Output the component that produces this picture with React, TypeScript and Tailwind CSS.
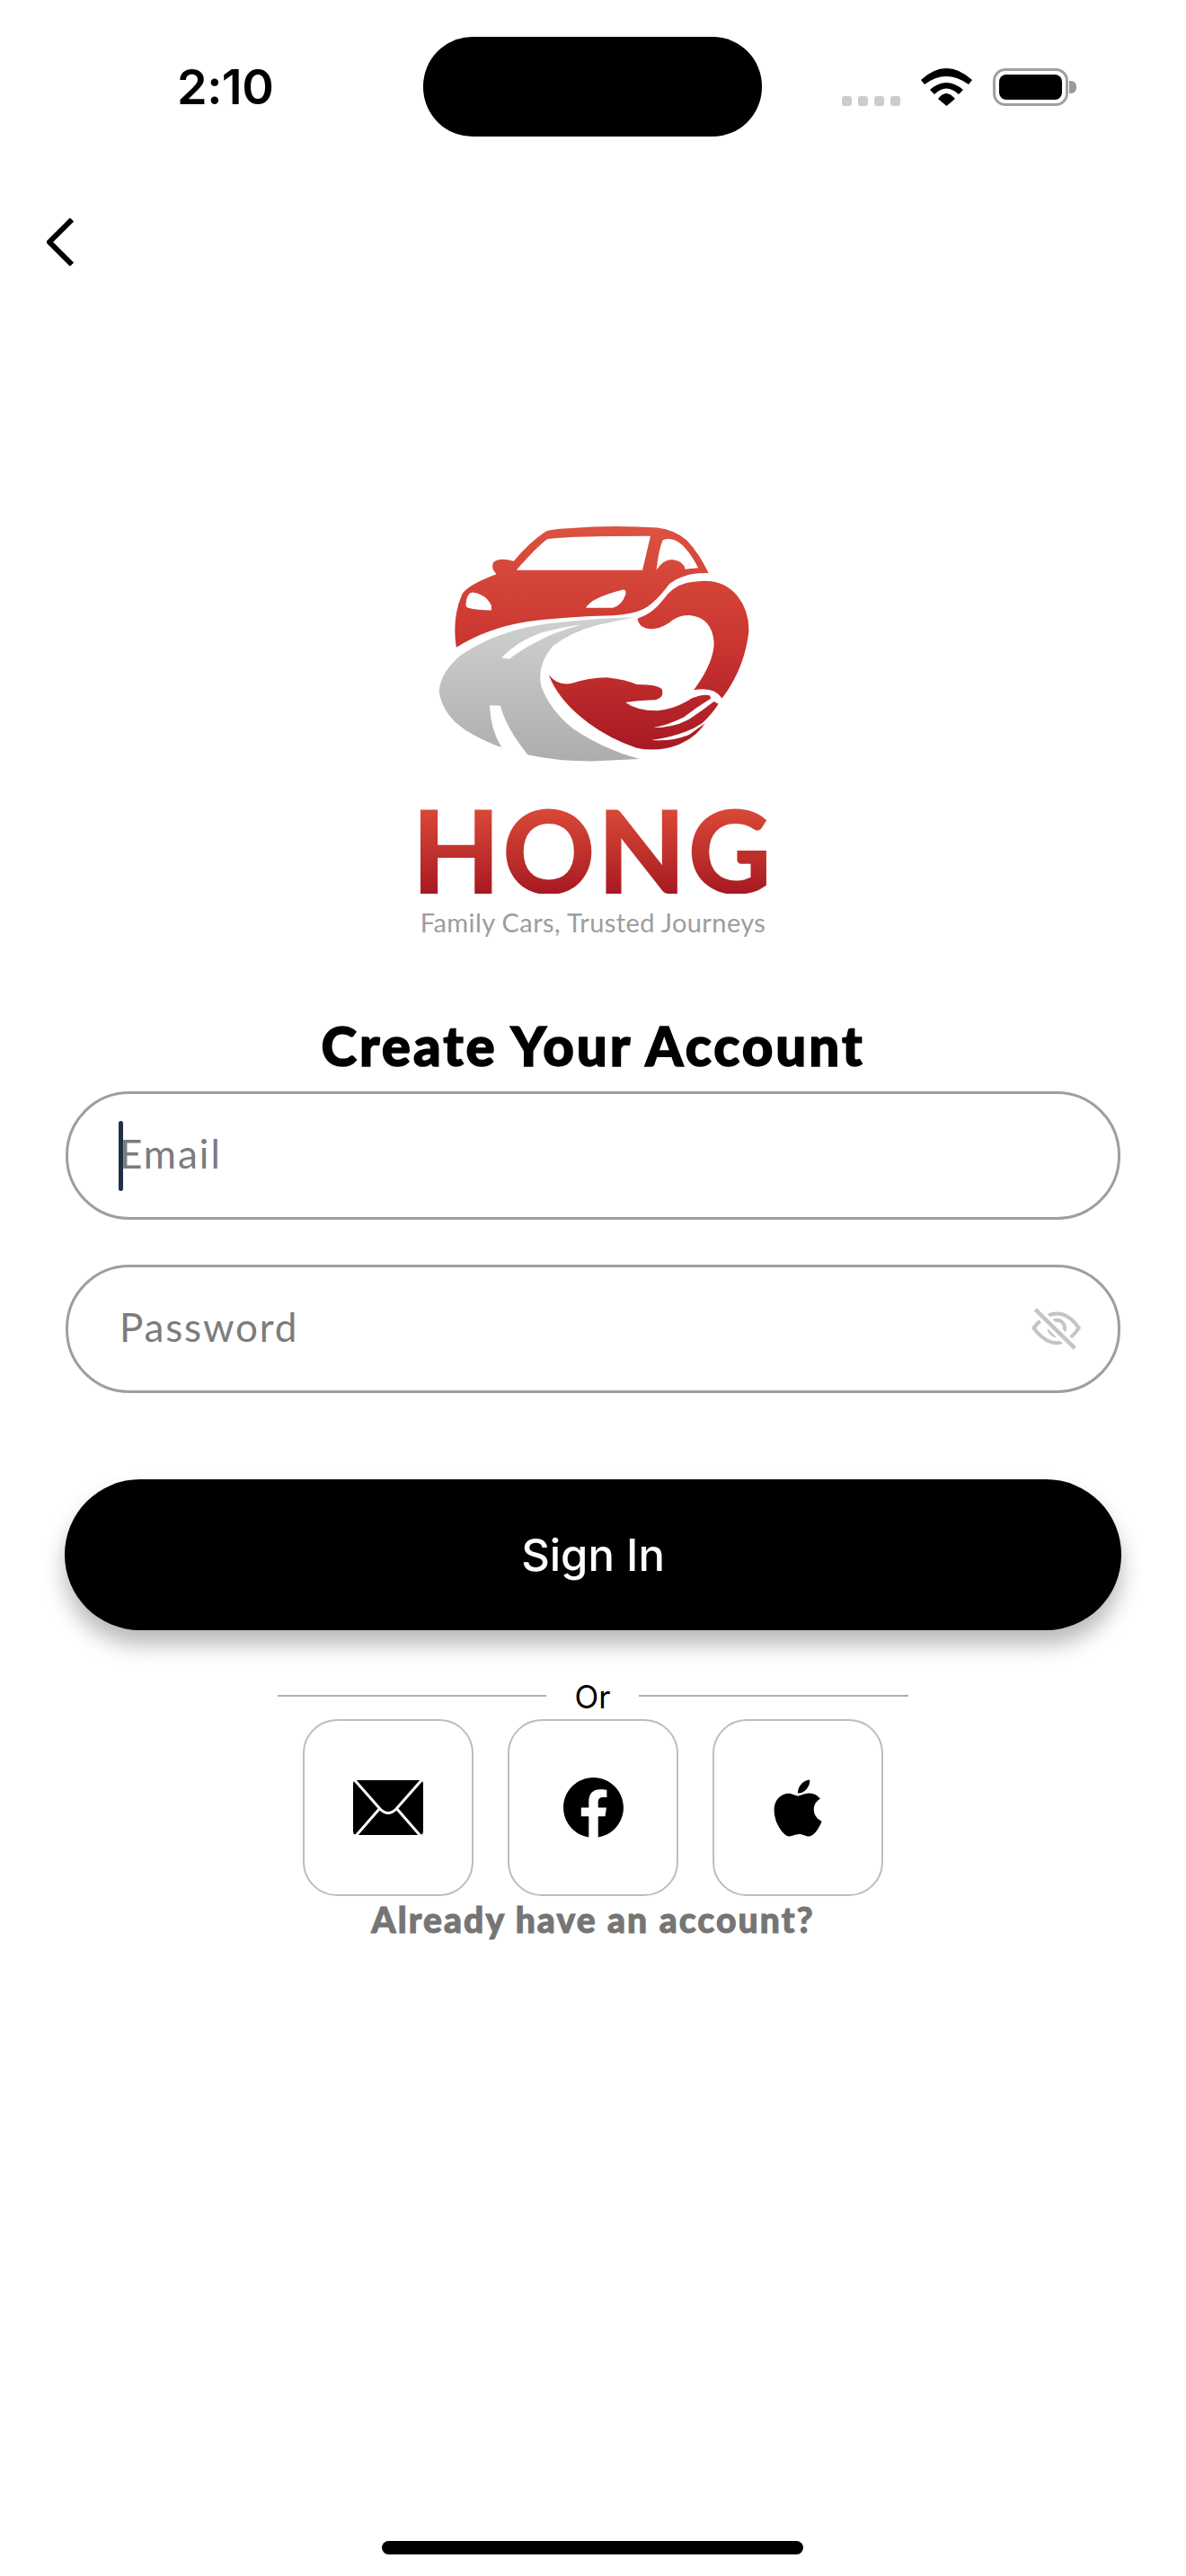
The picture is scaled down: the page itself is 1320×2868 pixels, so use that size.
import React from "react";
import { FaFacebook, FaApple } from "react-icons/fa";

function Logo() {
  return (
    <div className="h-[540px] flex flex-col items-center">
      <svg viewBox="0 0 1568 1031" preserveAspectRatio="none" className="w-[520px] h-[355px] block">
        <defs>
          <linearGradient id="red" gradientUnits="userSpaceOnUse" x1="0" y1="133" x2="0" y2="855">
            <stop offset="0" stopColor="#dd5240" />
            <stop offset="0.55" stopColor="#c93430" />
            <stop offset="1" stopColor="#a71923" />
          </linearGradient>
          <linearGradient id="gray" gradientUnits="userSpaceOnUse" x1="0" y1="430" x2="0" y2="893">
            <stop offset="0" stopColor="#cfd0d0" />
            <stop offset="1" stopColor="#adadad" />
          </linearGradient>
        </defs>
        <path
          fill="url(#red)"
          d="M325 525 Q310 430 345 352 Q365 322 460 288 Q440 270 450 250 Q470 233 518 246 Q570 185 625 150 Q640 143 700 140 Q850 128 1000 138 Q1060 145 1100 180 Q1140 220 1172 285 Q1090 282 1040 320 Q990 385 950 402 Q920 417 850 422 Q700 425 560 442 Q430 462 325 525 Z"
        />
        <path fill="#fff" d="M527 275 Q590 205 630 175 Q700 165 977 165 L950 275 Z" />
        <path fill="#fff" d="M997 275 Q1003 215 1018 178 Q1050 165 1085 195 Q1115 225 1137 268 L1093 272 Q1088 245 1050 241 Q1020 240 997 275 Z" />
        <path fill="#fff" d="M357 388 Q360 350 378 347 Q425 352 443 390 L443 405 Q395 405 365 397 Q357 395 357 388 Z" />
        <path fill="#fff" d="M760 397 Q775 365 885 338 Q897 338 893 355 Q880 390 850 397 Z" />
        <path
          fill="url(#red)"
          d="M933 432 Q985 415 1020 370 Q1060 315 1130 312 Q1220 300 1270 360 Q1307 405 1307 470 Q1295 590 1217 690 Q1190 650 1122 663 Q1190 575 1190 510 Q1185 430 1110 421 Q1070 420 1040 445 Q985 480 945 455 Q935 445 933 432 Z"
        />
        <path
          fill="url(#red)"
          d="M635 613 Q665 650 710 642 Q770 622 830 622 Q900 630 930 645 Q1000 645 1015 660 Q1025 685 995 695 Q950 695 893 703 Q930 730 1000 730 Q1060 725 1115 690 Q1150 675 1175 680 L1180 690 Q1130 720 1090 750 Q1040 775 985 785 Q1060 785 1110 755 Q1150 730 1190 700 L1205 708 Q1180 745 1150 770 Q1090 810 980 825 Q1060 830 1110 805 L1160 770 Q1130 815 1070 840 Q1000 865 930 850 Q840 820 770 770 Q670 700 635 613 Z"
        />
        <path
          fill="url(#gray)"
          d="M925 428 Q700 435 560 460 Q430 490 340 550 Q268 610 268 670 Q280 745 360 795 Q420 830 477 848 Q440 790 437 712 L473 714 Q495 790 565 872 Q660 893 780 893 L940 886 Q820 855 720 790 Q640 730 610 650 Q595 580 650 520 Q710 475 800 452 Q860 440 925 428 Z"
        />
        <path fill="#fff" d="M477 558 Q530 505 610 478 Q680 458 745 452 Q650 475 590 510 Q540 535 503 563 Z" />
      </svg>
      <div className="font-['Lato',sans-serif] font-bold text-[127px] leading-[100px] tracking-[3px] bg-gradient-to-b from-[#dc4b39] to-[#a81722] bg-clip-text text-transparent [-webkit-text-stroke:2px_transparent]">
        HONG
      </div>
      <div className="mt-[17px] font-['Lato',sans-serif] text-[29px] leading-[30px] tracking-[0.4px] text-[#9b9d9f]">
        Family Cars, Trusted Journeys
      </div>
    </div>
  );
}

function Wifi() {
  return (
    <svg viewBox="0 0 57 42" className="w-[57px] h-[42px] block">
      <path d="M0 13 Q28 -13 57 13 L53 18 Q28 0 4 18 Z" fill="#000" />
      <path d="M10 24 Q28 8 47 24 L42 29 Q28 16 15 29 Z" fill="#000" />
      <path d="M19 34 Q28 22 38 34 L28.5 42 Z" fill="#000" />
    </svg>
  );
}

function EyeSlash() {
  return (
    <svg viewBox="145 105 165 140" className="w-[55px] h-[47px] block" fill="none">
      <path d="M152 172 Q190 124 230 124 Q270 124 303 172 Q270 222 230 222 Q190 222 152 172 Z" stroke="#c4c4c4" strokeWidth="12" />
      <circle cx="230" cy="172" r="26" stroke="#c4c4c4" strokeWidth="12" />
      <path d="M158 110 L290 240" stroke="#fff" strokeWidth="34" />
      <path d="M158 110 L290 240" stroke="#c4c4c4" strokeWidth="13" />
    </svg>
  );
}

function Mail() {
  return (
    <svg viewBox="0 0 78 61" className="w-[78px] h-[61px] block">
      <rect x="0" y="0" width="78" height="61" rx="4" fill="#000" />
      <path d="M1 -1 L30 32 Q39 41 48 32 L77 -1" stroke="#fff" strokeWidth="3" fill="none" />
      <path d="M30 31 L3 62 M48 31 L75 62" stroke="#fff" strokeWidth="3" fill="none" />
    </svg>
  );
}

export default function App() {
  const lato = "font-['Lato',sans-serif]";
  return (
    <div className="w-[1320px] h-[2868px] bg-white flex flex-col overflow-hidden">
      <div className="flex items-center pl-[197px] pt-[41px] h-[152px]">
        <div className="w-[274px] font-['Inter',sans-serif] font-semibold text-[54px] leading-none tracking-[-0.5px] text-black">2:10</div>
        <div className="w-[377px] h-[111px] rounded-[55px] bg-black" />
        <div className="flex items-end ml-[89px] h-[42px]">
          <div className="flex gap-[7px]">
            <div className="w-[11px] h-[11px] rounded-[3px] bg-[#cccccc]" />
            <div className="w-[11px] h-[11px] rounded-[3px] bg-[#cccccc]" />
            <div className="w-[11px] h-[11px] rounded-[3px] bg-[#cccccc]" />
            <div className="w-[11px] h-[11px] rounded-[3px] bg-[#cccccc]" />
          </div>
          <div className="ml-[23px]"><Wifi /></div>
          <div className="ml-[23px] flex items-center h-[42px]">
            <div className="w-[84px] h-[42px] rounded-[14px] border-[3px] border-[#a0a0a0] p-[4px]">
              <div className="w-full h-full rounded-[8px] bg-black" />
            </div>
            <div className="w-[8px] h-[14px] ml-[1px] rounded-r-[6px] bg-[#999999]" />
          </div>
        </div>
      </div>

      <div className="pl-[52px] pt-[91px]">
        <svg viewBox="0 0 30 53" className="w-[30px] h-[53px] block" fill="none">
          <path d="M28 1.5 L3 26.5 L28 51.5" stroke="#000" strokeWidth="6" />
        </svg>
      </div>

      <div className="mt-[244px] flex justify-center">
        <Logo />
      </div>

      <div className={`mt-[44px] h-[80px] flex items-center justify-center ${lato} font-black text-[60px] leading-none tracking-[3px] text-black [-webkit-text-stroke:1.5px_black]`}>
        Create Your Account
      </div>

      <div className="mx-[73px] flex flex-col gap-[50px] mt-[11px]">
        <div className="h-[143px] rounded-[71px] border-[3px] border-[#9e9e9e] flex items-center pb-[5px] pl-[57px] relative">
          <span className={`${lato} text-[44px] leading-none text-[#7c7c7c] tracking-[2px]`}>Email</span>
          <div className="absolute left-[56px] top-[30px] w-[5px] h-[78px] rounded-full bg-[#1f2f45]" />
        </div>
        <div className="h-[143px] rounded-[71px] border-[3px] border-[#9e9e9e] flex items-center justify-between pl-[57px] pr-[41px]">
          <span className={`${lato} text-[44px] leading-none pb-[5px] text-[#7c7c7c] tracking-[1.8px]`}>Password</span>
          <EyeSlash />
        </div>
      </div>

      <div className="mx-[72px] mt-[96px] h-[168px] rounded-[84px] bg-black flex items-center justify-center shadow-[0_16px_24px_rgba(0,0,0,0.28)]">
        <span className="font-['Inter',sans-serif] font-medium text-[49px] leading-none text-white">Sign In</span>
      </div>

      <div className="mt-[57px] h-[32px] flex items-center justify-center">
        <div className="w-[299px] h-[2px] bg-[#b0b0b0]" />
        <div className="w-[103px] text-center font-['Inter',sans-serif] text-[35px] leading-none text-black pt-[2px]">Or</div>
        <div className="w-[300px] h-[2px] bg-[#b0b0b0]" />
      </div>

      <div className="mt-[10px] flex justify-center gap-[38px]">
        <div className="w-[190px] h-[197px] rounded-[38px] border-2 border-[#bdbdbd] flex items-center justify-center"><Mail /></div>
        <div className="w-[190px] h-[197px] rounded-[38px] border-2 border-[#bdbdbd] flex items-center justify-center"><FaFacebook size={69} color="#000" /></div>
        <div className="w-[190px] h-[197px] rounded-[38px] border-2 border-[#bdbdbd] flex items-center justify-center"><FaApple size={72} color="#000" /></div>
      </div>

      <div className={`mt-[2px] text-center ${lato} font-black text-[39px] leading-[48px] tracking-[2.1px] text-[#757575] [-webkit-text-stroke:1px_#757575]`}>Already have an account?</div>

      <div className="mt-auto mb-[24px] ml-[425px] w-[469px] h-[15px] rounded-full bg-black" />
    </div>
  );
}
